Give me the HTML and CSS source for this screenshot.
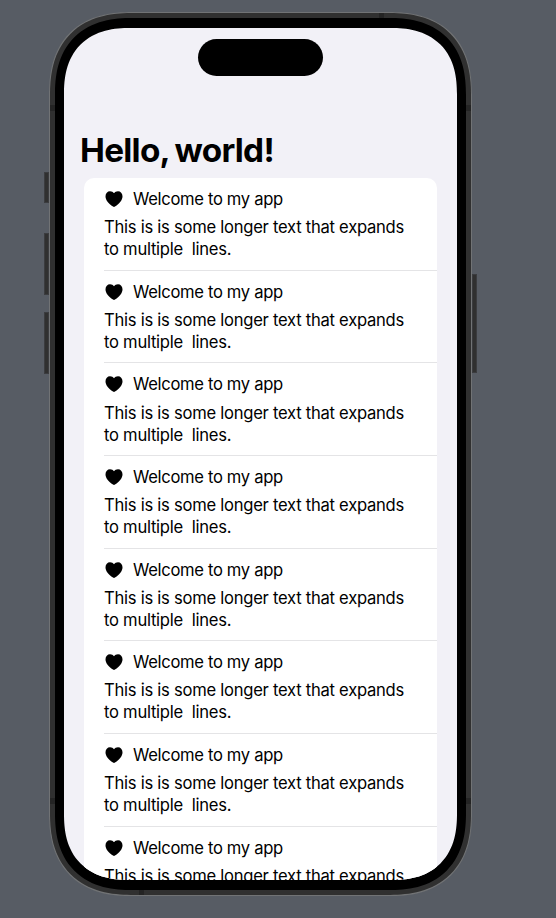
FILE: index.html
```html
<!DOCTYPE html>
<html lang="en">
<head>
<meta charset="utf-8">
<title>Hello, world!</title>
<link rel="stylesheet" href="styles.css">
</head>
<body>
<svg width="0" height="0" class="defs"><symbol id="heart" viewBox="0 0 18 16"><path d="M9 16C8.7 16 8.3 15.7 8 15.5C3.5 12.5.5 9 .5 5.2C.5 2.2 2.5.2 5 .2C6.8.2 8.2 1 9 2.2C9.8 1 11.2.2 13 .2C15.5.2 17.5 2.2 17.5 5.2C17.5 9 14.5 12.5 10 15.5C9.7 15.7 9.3 16 9 16Z"/></symbol></svg>
<div class="phone">
  <i class="button action"></i><i class="button up"></i><i class="button down"></i><i class="button power"></i>
  <div class="rim">
    <i class="band top"></i><i class="band bottom"></i><i class="band left-high"></i><i class="band right-high"></i><i class="band left-low"></i><i class="band right-low"></i>
    <div class="bezel">
      <main class="screen">
        <div class="island"></div>
        <h1>Hello, world!</h1>
        <ul class="list">
          <li><div class="label"><svg><use href="#heart"/></svg><span>Welcome to my app</span></div><p>This is is some longer text that expands<br>to multiple&nbsp; lines.</p></li>
          <li><div class="label"><svg><use href="#heart"/></svg><span>Welcome to my app</span></div><p>This is is some longer text that expands<br>to multiple&nbsp; lines.</p></li>
          <li><div class="label"><svg><use href="#heart"/></svg><span>Welcome to my app</span></div><p>This is is some longer text that expands<br>to multiple&nbsp; lines.</p></li>
          <li><div class="label"><svg><use href="#heart"/></svg><span>Welcome to my app</span></div><p>This is is some longer text that expands<br>to multiple&nbsp; lines.</p></li>
          <li><div class="label"><svg><use href="#heart"/></svg><span>Welcome to my app</span></div><p>This is is some longer text that expands<br>to multiple&nbsp; lines.</p></li>
          <li><div class="label"><svg><use href="#heart"/></svg><span>Welcome to my app</span></div><p>This is is some longer text that expands<br>to multiple&nbsp; lines.</p></li>
          <li><div class="label"><svg><use href="#heart"/></svg><span>Welcome to my app</span></div><p>This is is some longer text that expands<br>to multiple&nbsp; lines.</p></li>
          <li><div class="label"><svg><use href="#heart"/></svg><span>Welcome to my app</span></div><p>This is is some longer text that expands</p></li>
        </ul>
      </main>
    </div>
  </div>
</div>
</body>
</html>
```
FILE: styles.css
```css
* { box-sizing: border-box; }
html, body { margin: 0; height: 918px; overflow: hidden; }
body { display: flow-root; background: #575c64; font-family: Inter, "Liberation Sans", sans-serif; color: #000; }
.defs { position: absolute; }
.phone { position: relative; width: 423px; height: 884px; margin: 12px 0 0 49px; }
.rim { position: relative; overflow: hidden; height: 100%; padding: 5px; background: #303030; border: 1px solid #717375; border-radius: 71px; }
.bezel { position: relative; height: 100%; padding: 10px 9px 10px; background: #000; border-radius: 65px; }
.screen { height: 852px; width: 393px; overflow: hidden; background: #f2f1f7; border-radius: 56px; display: flex; flex-direction: column; }
@supports (corner-shape: superellipse(1.26)) {
  .rim, .bezel, .screen { corner-shape: superellipse(1.26); }
  .rim { border-radius: 83px; }
  .bezel { border-radius: 77px; }
  .screen { border-radius: 66px; }
}
.island { flex: none; width: 125px; height: 37px; margin: 11px 0 0 134px; border-radius: 19px; background: #000; }
h1 { flex: none; margin: 54px 0 0 16px; font-size: 33.3px; line-height: 41px; font-weight: 700; letter-spacing: -.72px; word-spacing: -1.5px; white-space: nowrap; }
.list { flex: none; list-style: none; margin: 7px 20px 0; padding: 0 0 0 20px; background: #fff; border-radius: 10px 10px 0 0; }
li { height: 92.67px; padding-top: 10.1px; border-bottom: 1px solid #e4e4e6; }
.label { display: flex; align-items: center; height: 22px; font-size: 16.6px; letter-spacing: -.32px; white-space: nowrap; }
.label svg { width: 18px; height: 16px; margin: 0 10px 0 1px; }
p { margin: 6.1px 0 0; font-size: 16.6px; line-height: 22px; letter-spacing: -.26px; white-space: nowrap; }
.button { position: absolute; width: 5px; background: #303030; border: 1px solid #3b3c3f; }
.action { left: -5px; top: 160px; height: 31px; }
.up { left: -5px; top: 221px; height: 62px; }
.down { left: -5px; top: 300px; height: 62px; }
.power { right: -5px; top: 262px; height: 99px; }
.band { position: absolute; background: #242424; width: 5px; height: 6px; }
.top { left: 329px; top: 0; }
.bottom { left: 89px; bottom: 0; }
.left-high { left: 0; top: 92px; }
.right-high { right: 0; top: 92px; }
.left-low { left: 0; top: 785px; }
.right-low { right: 0; top: 785px; }
```
